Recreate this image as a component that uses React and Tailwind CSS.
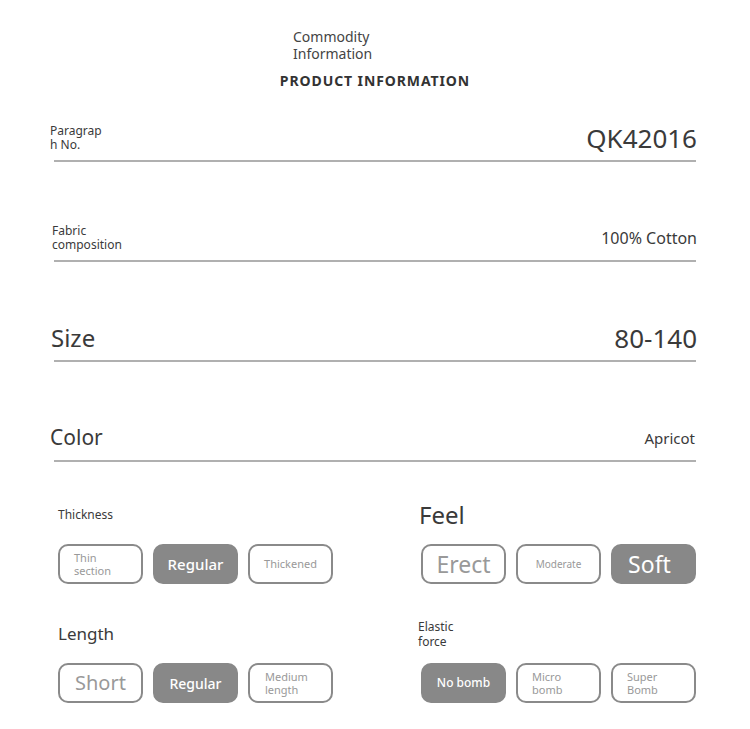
import React from "react";

const rows = [
    { label: "Paragrap\nh No.", labelCls: "text-[12px] leading-[14px]", value: "QK42016", valueCls: "text-[26px]" },
    { label: "Fabric\ncomposition", labelCls: "text-[12px] leading-[14px] pl-[2px]", value: "100% Cotton", valueCls: "text-[16px]" },
    { label: "Size", labelCls: "text-[24px] pl-[1px]", value: "80-140", valueCls: "text-[26px]" },
    { label: "Color", labelCls: "text-[21px]", value: "Apricot", valueCls: "text-[15px] pr-[2px]" },
];

// one option pill
function Pill({ text, active, cls = "" }) {
    return (
        <div
            className={
                "w-[85px] h-[40px] rounded-[10px] border-2 flex items-center " +
                (active ? "bg-[#888888] border-[#888888] text-white " : "border-[#8a8a8a] text-[#999999] ") +
                cls
            }
        >
            {text}
        </div>
    );
}

function Two({ a, b, cls = "" }) {
    return (
        <div className={"flex flex-col " + cls}>
            <div>{a}</div>
            <div>{b}</div>
        </div>
    );
}

function Group({ label, labelCls, children }) {
    return (
        <div className="flex flex-col">
            <div className={"h-[30px] flex items-center text-[#3a3a3a] " + labelCls}>{label}</div>
            <div className="mt-[14px] flex gap-[10px]">{children}</div>
        </div>
    );
}

export default function App() {
    return (
        <div className="w-[750px] h-[729px] bg-white overflow-hidden" style={{ fontFamily: '"Noto Sans", "Open Sans", sans-serif' }}>
            <div className="pt-[28px] pl-[293px] text-[14px] leading-[17px] text-[#444444]">
                <div>Commodity</div>
                <div>Information</div>
            </div>
            <div className="mt-[9px] text-center text-[14px] leading-[20px] font-bold text-[#333333] tracking-[0.9px]">
                PRODUCT INFORMATION
            </div>

            <div className="mt-[25px]">
                {rows.map((row, i) => (
                    <div key={i} className={i > 0 ? "mt-[54px]" : ""}>
                        <div className="h-[44px] pl-[50px] pr-[53px] flex items-center justify-between text-[#3a3a3a]">
                            <div className={"whitespace-pre-line " + row.labelCls}>{row.label}</div>
                            <div className={row.valueCls}>{row.value}</div>
                        </div>
                        <div className="mx-[54px] h-[2px] bg-[#b0b0b0]"></div>
                    </div>
                ))}
            </div>

            <div className="mt-[38px] grid grid-cols-[360px_1fr] gap-y-[35px]">
                <div className="pl-[58px]">
                    <Group label="Thickness" labelCls="text-[12px]">
                        <Pill text={<Two a="Thin" b="section" cls="leading-[13px]" />} cls="text-[11px] pl-[14px]" />
                        <Pill text="Regular" active cls="justify-center text-[15px] font-medium" />
                        <Pill text="Thickened" cls="justify-center text-[11px]" />
                    </Group>
                </div>
                <div className="pl-[59px]">
                    <Group label="Feel" labelCls="text-[24px]">
                        <div className="ml-[2px] flex gap-[10px]">
                            <Pill text="Erect" cls="justify-center text-[23px]" />
                            <Pill text="Moderate" cls="justify-center text-[10px]" />
                            <Pill text="Soft" active cls="justify-center text-[23px] pr-[8px]" />
                        </div>
                    </Group>
                </div>
                <div className="pl-[58px]">
                    <Group label="Length" labelCls="text-[17px]">
                        <Pill text="Short" cls="justify-center text-[20px]" />
                        <Pill text="Regular" active cls="justify-center text-[14px] font-medium" />
                        <Pill text={<Two a="Medium" b="length" cls="leading-[13px]" />} cls="text-[11px] pl-[15px]" />
                    </Group>
                </div>
                <div className="pl-[58px]">
                    <Group label={<Two a="Elastic" b="force" cls="leading-[15px]" />} labelCls="text-[12px]">
                        <div className="ml-[3px] flex gap-[10px]">
                            <Pill text="No bomb" active cls="justify-center text-[12px] font-medium" />
                            <Pill text={<Two a="Micro" b="bomb" cls="leading-[13px]" />} cls="text-[11px] pl-[14px]" />
                            <Pill text={<Two a="Super" b="Bomb" cls="leading-[13px]" />} cls="text-[11px] pl-[14px]" />
                        </div>
                    </Group>
                </div>
            </div>
        </div>
    );
}
